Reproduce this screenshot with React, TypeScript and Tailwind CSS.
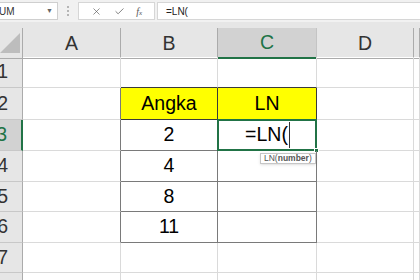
import { X, Check } from 'lucide-react'

const font = { fontFamily: '"Liberation Sans", Arial, sans-serif' }

const GRID = 'grid grid-cols-[23px_98px_97px_99px_97px_1fr]'
const cell = 'border-r border-b border-[#dadada] flex items-center justify-center text-[19.5px] text-black'
const dark = '#3a3a3a'

type Row = { n: number; h: string; b?: string; c?: string }

const rows: Row[] = [
  { n: 1, h: 'h-[31px]' },
  { n: 2, h: 'h-[32px]', b: 'Angka', c: 'LN' },
  { n: 3, h: 'h-[31px]', b: '2' },
  { n: 4, h: 'h-[31px]', b: '4' },
  { n: 5, h: 'h-[30px]', b: '8' },
  { n: 6, h: 'h-[31px]', b: '11' },
  { n: 7, h: 'h-[30px]' },
  { n: 8, h: 'h-[31px]' },
]

function Toolbar() {
  return (
    <div className="h-[22px] bg-[#f1f1f1] flex items-start pt-[2px] text-[10px] text-[#333]">
      {/* name box */}
      <div className="w-[58px] h-[18px] bg-white border border-l-0 border-[#cfcfcf] flex items-center justify-between pr-[4px]">
        <span className="-ml-[1px]">UM</span>
        <span className="text-[7px] text-[#666]">▼</span>
      </div>
      <div className="w-[20px] h-[18px] flex flex-col items-center justify-center gap-[2px]">
        <span className="w-[2px] h-[2px] bg-[#b5b5b5]" />
        <span className="w-[2px] h-[2px] bg-[#b5b5b5]" />
        <span className="w-[2px] h-[2px] bg-[#b5b5b5]" />
      </div>
      {/* cancel / enter / fx */}
      <div className="w-[77px] h-[18px] bg-white border border-[#d6d6d6] flex items-center justify-around px-[6px] text-[#555]">
        <X size={11} strokeWidth={1.4} />
        <Check size={11} strokeWidth={1.6} />
        <span className="italic text-[10px]" style={{ fontFamily: '"Liberation Serif", serif' }}>
          f<span className="text-[7px]">x</span>
        </span>
      </div>
      <div className="ml-[2px] flex-1 h-[18px] bg-white border border-r-0 border-[#d6d6d6] flex items-center pl-[8px] text-[#222]">
        =LN(
      </div>
    </div>
  )
}

function Header() {
  return (
    <div className="bg-[#e6e6e6]">
      <div className="h-[6px]" />
      <div className={`${GRID} h-[29px] text-[19.5px] text-[#333]`}>
        <div className="border-r border-b border-[#ababab] relative">
          <svg width="23" height="28" className="absolute left-0 top-0">
            <polygon points="20,5 20,25 0,25" fill="#bdbdbd" />
          </svg>
        </div>
        {['A', 'B', 'C', 'D', 'E'].map((l) =>
          l === 'C' ? (
            <div
              key={l}
              className="bg-[#d2d2d2] border-r border-[#c4c4c4] border-b-2 border-b-[#217346] flex items-center justify-center text-[#217346]"
            >
              {l}
            </div>
          ) : (
            <div key={l} className="border-r border-b border-[#ababab] flex items-center justify-center">
              {l === 'E' ? '' : l}
            </div>
          ),
        )}
      </div>
    </div>
  )
}

export default function App() {
  return (
    <div className="w-[420px] h-[280px] overflow-hidden bg-white" style={font}>
      <Toolbar />
      <Header />
      {rows.map((r) => {
        const inTable = r.n >= 2 && r.n <= 6
        const active = r.n === 3
        return (
          <div key={r.n} className={`${GRID} ${r.h}`}>
            {/* row header */}
            <div
              className={`overflow-hidden flex items-center justify-end pr-[14px] text-[19.5px] border-b border-[#c8c8c8] ${
                active
                  ? 'bg-[#d2d2d2] text-[#217346] border-r-2 border-r-[#217346]'
                  : 'bg-[#e6e6e6] text-[#333] border-r border-r-[#ababab]'
              }`}
            >
              {r.n}
            </div>
            {/* A */}
            <div className={`${cell} ${inTable ? 'border-r-[#7a7a7a]' : ''} ${r.n === 2 ? 'border-r-[#3a3a3a]' : ''}`} />
            {/* B */}
            <div
              className={`${cell} ${r.n === 1 ? 'border-b-[#3a3a3a]' : ''} ${
                r.n === 2 ? 'bg-[#ffff00] border-r-[#3a3a3a] border-b-[#3a3a3a]' : ''
              } ${inTable && r.n !== 2 ? 'border-r-[#7a7a7a] border-b-[#7a7a7a]' : ''}`}
            >
              {r.b}
            </div>
            {/* C */}
            <div
              className={`${cell} relative ${r.n === 1 ? 'border-b-[#3a3a3a]' : ''} ${
                r.n === 2 ? 'bg-[#ffff00] border-r-[#3a3a3a] border-b-[#3a3a3a]' : ''
              } ${inTable && r.n !== 2 ? 'border-r-[#7a7a7a] border-b-[#7a7a7a]' : ''}`}
            >
              {r.c}
              {active && (
                <>
                  <div className="absolute -left-px -top-px -right-px -bottom-px border-2 border-[#217346]" />
                  <div className="absolute -right-[3px] -bottom-[3px] w-[5px] h-[5px] bg-[#217346] border border-white" />
                  <div className="flex items-center">
                    <span className="pl-[1px]">=LN(</span>
                    <span className="ml-[1px] w-px h-[26px] bg-[#333]" />
                  </div>
                  <div className="absolute left-[42px] top-[33px] h-[11px] px-[3px] bg-white border border-[#c6c6c6] shadow-sm flex items-center text-[8.5px] text-[#555] leading-none z-10">
                    LN(<b className="font-bold">number</b>)
                  </div>
                </>
              )}
            </div>
            {/* D */}
            <div className={cell} />
            {/* E */}
            <div className={cell} />
          </div>
        )
      })}
    </div>
  )
}
